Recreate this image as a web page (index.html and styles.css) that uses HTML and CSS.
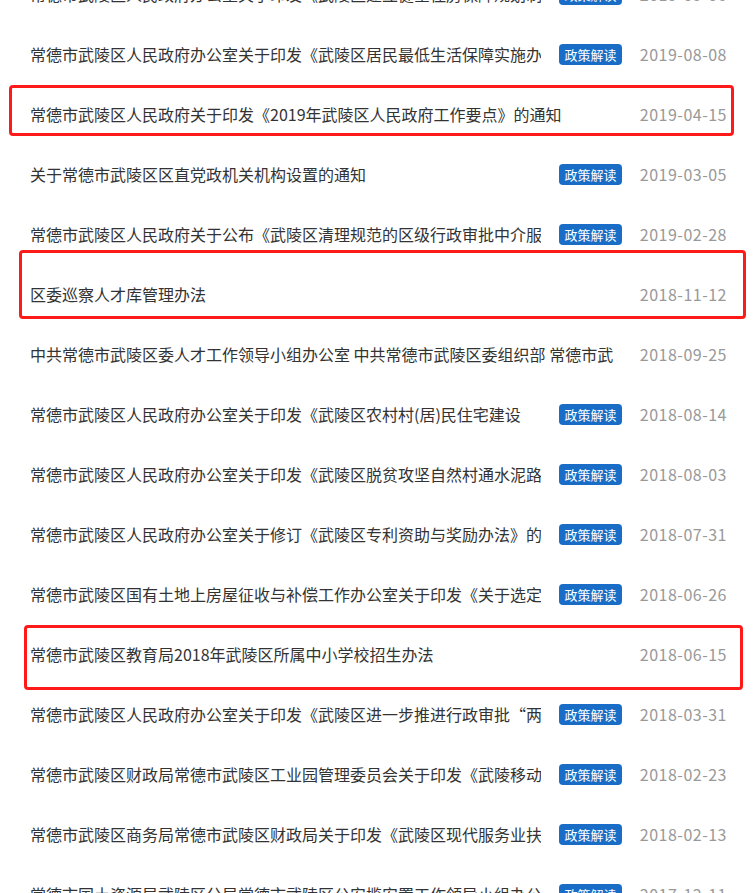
FILE: index.html
```html
<!DOCTYPE html>
<html lang="zh-CN">

<head>
    <meta charset="UTF-8">
    <meta name="viewport" content="width=device-width, initial-scale=1.0">
    <title>政策文件</title>
    <link rel="stylesheet" href="styles.css">
</head>

<body>
    <div class="page">
        <ul class="doc-list">
            <li class="doc"><span class="title">常德市武陵区人民政府办公室关于印发《武陵区建立健全住房保障规划制</span><span class="badge">政策解读</span><span class="date">2019-09-06</span></li>
            <li class="doc"><span class="title">常德市武陵区人民政府办公室关于印发《武陵区居民最低生活保障实施办</span><span class="badge">政策解读</span><span class="date">2019-08-08</span></li>
            <li class="doc"><span class="title">常德市武陵区人民政府关于印发《2019年武陵区人民政府工作要点》的通知</span><span class="date">2019-04-15</span></li>
            <li class="doc"><span class="title">关于常德市武陵区区直党政机关机构设置的通知</span><span class="badge">政策解读</span><span class="date">2019-03-05</span></li>
            <li class="doc"><span class="title">常德市武陵区人民政府关于公布《武陵区清理规范的区级行政审批中介服</span><span class="badge">政策解读</span><span class="date">2019-02-28</span></li>
            <li class="doc"><span class="title">区委巡察人才库管理办法</span><span class="date">2018-11-12</span></li>
            <li class="doc"><span class="title">中共常德市武陵区委人才工作领导小组办公室 中共常德市武陵区委组织部 常德市武</span><span class="date">2018-09-25</span></li>
            <li class="doc"><span class="title">常德市武陵区人民政府办公室关于印发《武陵区农村村(居)民住宅建设</span><span class="badge">政策解读</span><span class="date">2018-08-14</span></li>
            <li class="doc"><span class="title">常德市武陵区人民政府办公室关于印发《武陵区脱贫攻坚自然村通水泥路</span><span class="badge">政策解读</span><span class="date">2018-08-03</span></li>
            <li class="doc"><span class="title">常德市武陵区人民政府办公室关于修订《武陵区专利资助与奖励办法》的</span><span class="badge">政策解读</span><span class="date">2018-07-31</span></li>
            <li class="doc"><span class="title">常德市武陵区国有土地上房屋征收与补偿工作办公室关于印发《关于选定</span><span class="badge">政策解读</span><span class="date">2018-06-26</span></li>
            <li class="doc"><span class="title">常德市武陵区教育局2018年武陵区所属中小学校招生办法</span><span class="date">2018-06-15</span></li>
            <li class="doc"><span class="title">常德市武陵区人民政府办公室关于印发《武陵区进一步推进行政审批“两</span><span class="badge">政策解读</span><span class="date">2018-03-31</span></li>
            <li class="doc"><span class="title">常德市武陵区财政局常德市武陵区工业园管理委员会关于印发《武陵移动</span><span class="badge">政策解读</span><span class="date">2018-02-23</span></li>
            <li class="doc"><span class="title">常德市武陵区商务局常德市武陵区财政局关于印发《武陵区现代服务业扶</span><span class="badge">政策解读</span><span class="date">2018-02-13</span></li>
            <li class="doc"><span class="title">常德市国土资源局武陵区分局常德市武陵区公安揽安置工作领导小组办公</span><span class="badge">政策解读</span><span class="date">2017-12-11</span></li>
        </ul>

        <!-- red annotation frames -->
        <div class="mark mark-1"></div>
        <div class="mark mark-2"></div>
        <div class="mark mark-3"></div>
    </div>
</body>

</html>
```

FILE: styles.css
```css
body {
    margin: 0;
    background: #fff;
    font-family: "Noto Sans CJK SC", "Noto Sans", sans-serif;
    color: #333;
    overflow: hidden;
}

.page {
    position: relative;
    display: flow-root;
}

.doc-list {
    list-style: none;
    margin: -36px 0 0 0;
    padding: 0;
}

.doc {
    display: flex;
    align-items: center;
    height: 60px;
    padding: 0 28px 0 30px;
}

.title {
    flex: 1;
    min-width: 0;
    font-size: 16px;
    line-height: 22px;
    white-space: nowrap;
    overflow: hidden;
}

.badge {
    flex: none;
    width: 63px;
    height: 21px;
    margin-left: 18px;
    background-color: #1a6dc6;
    border-radius: 4px;
    color: #fff;
    font-size: 13px;
    line-height: 21px;
    text-align: center;
}

.date {
    flex: none;
    width: 89px;
    margin-left: 16px;
    color: #999;
    font-size: 16px;
    line-height: 22px;
    text-align: right;
    letter-spacing: 0.5px;
}

.mark {
    position: absolute;
    border: 3px solid #ff1a1a;
    border-radius: 4px;
    box-sizing: border-box;
}

.mark-1 {
    left: 9px;
    top: 85px;
    width: 725px;
    height: 51px;
}

.mark-2 {
    left: 19px;
    top: 250px;
    width: 727px;
    height: 69px;
}

.mark-3 {
    left: 24px;
    top: 625px;
    width: 719px;
    height: 65px;
}
```
